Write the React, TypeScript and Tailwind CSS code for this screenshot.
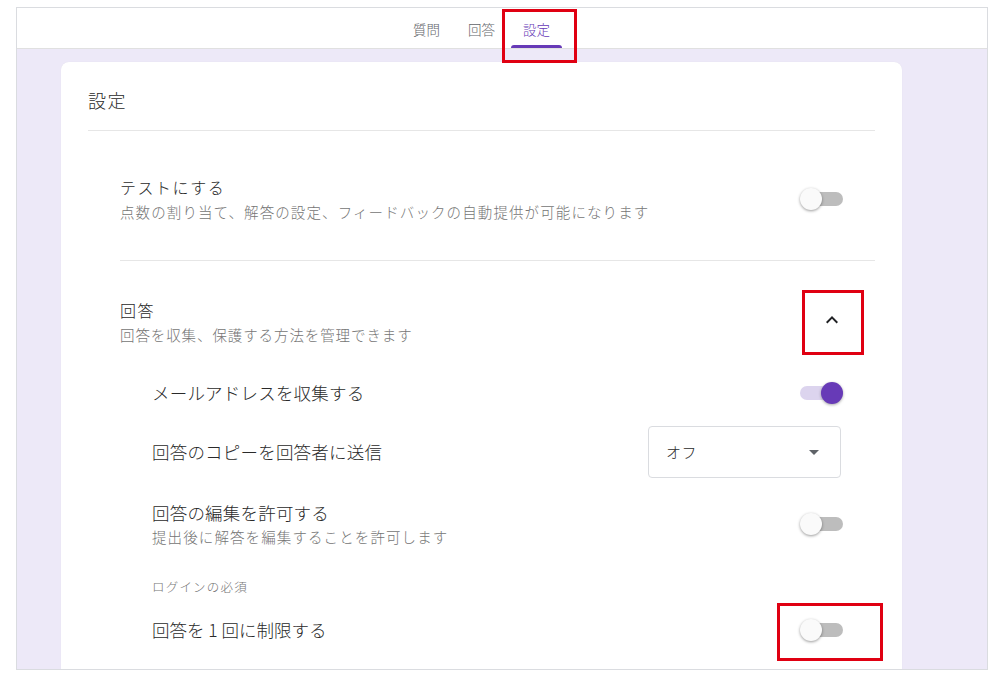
import React from "react";

function Toggle({ on = false }: { on?: boolean }) {
  if (on) {
    return (
      <div className="relative w-[43px] h-[22px] shrink-0">
        <div className="absolute left-0 right-[4px] top-[4px] h-[14px] rounded-full bg-[#dcd4ee]" />
        <div className="absolute right-0 top-0 w-[22px] h-[22px] rounded-full bg-[#673ab7] shadow-[0_1px_3px_rgba(0,0,0,0.35)]" />
      </div>
    );
  }
  return (
    <div className="relative w-[43px] h-[22px] shrink-0">
      <div className="absolute left-[4px] right-0 top-[4px] h-[14px] rounded-full bg-[#bdbdbd]" />
      <div className="absolute left-0 top-0 w-[22px] h-[22px] rounded-full bg-[#fafafa] shadow-[0_1px_3px_rgba(0,0,0,0.4)]" />
    </div>
  );
}

function RedBox({ cls }: { cls: string }) {
  return <div className={"absolute border-[3px] border-[#e00012] pointer-events-none " + cls} />;
}

export default function App() {
  return (
    <div className="relative w-[1000px] h-[681px] bg-white overflow-hidden font-light font-['Noto_Sans_CJK_JP','Noto_Sans',sans-serif]">
      <div className="absolute left-[16px] top-[7px] w-[972px] h-[663px] border border-[#dadce0] overflow-hidden flex flex-col">
        {/* header */}
        <div className="h-[41px] shrink-0 bg-white border-b border-[#e0e0e0] flex justify-center pr-[41px]">
          <div className="flex h-full items-stretch gap-[4px]">
            <div className="relative px-[12px] flex items-center pt-[2px] text-[13.5px] leading-[20px] text-[#5f6368]">質問</div>
            <div className="relative px-[12px] flex items-center pt-[2px] text-[13.5px] leading-[20px] text-[#5f6368]">回答</div>
            <div className="relative px-[12px] flex items-center pt-[2px] text-[13.5px] leading-[20px] text-[#673ab7]">
              設定
              <div className="absolute left-0 right-0 bottom-0 h-[3px] rounded-t-[3px] bg-[#673ab7]" />
            </div>
          </div>
        </div>
        {/* main */}
        <div className="flex-1 bg-[#ede9f8] pt-[13px] pl-[44px] pr-[85px] overflow-hidden">
          <div className="bg-white rounded-[8px] h-[700px] px-[27px] shadow-[0_0_1px_rgba(0,0,0,0.08)]">
            <div className="pt-[26px] text-[18px] tracking-[1.5px] leading-[24px] text-[#2a2a2a]">設定</div>
            <div className="mt-[18px] h-px bg-[#e6e6e6]" />
            <div className="pl-[32px]">
              {/* Quiz section */}
              <div className="pt-[44px] pb-[38px] pr-[32px] flex items-center justify-between">
                <div>
                  <div className="text-[16px] tracking-[1.5px] leading-[24px] text-[#2a2a2a]">テストにする</div>
                  <div className="mt-[3px] text-[14.5px] tracking-[1.1px] leading-[20px] text-[#757575]">点数の割り当て、解答の設定、フィードバックの自動提供が可能になります</div>
                </div>
                <Toggle />
              </div>
              <div className="h-px bg-[#e6e6e6]" />
              {/* Responses section */}
              <div className="pt-[37px] pr-[32px]">
                <div className="flex items-center justify-between">
                  <div>
                    <div className="text-[16px] tracking-[1.5px] leading-[24px] text-[#2a2a2a]">回答</div>
                    <div className="mt-[3px] text-[14.5px] tracking-[0.9px] leading-[20px] text-[#757575]">回答を収集、保護する方法を管理できます</div>
                  </div>
                  <svg width="24" height="24" viewBox="0 0 24 24" className="mr-[-1px] mt-[-3px]">
                    <path d="M7.41 15.41L12 10.83l4.59 4.58L18 14l-6-6-6 6z" fill="#202124" />
                  </svg>
                </div>
                <div className="pl-[32px] mt-[20px]">
                  <div className="h-[56px] flex items-center justify-between">
                    <div className="text-[17.5px] tracking-[0.2px] leading-[24px] text-[#2a2a2a]">メールアドレスを収集する</div>
                    <Toggle on />
                  </div>
                  <div className="h-[62px] flex items-center justify-between">
                    <div className="text-[17.5px] tracking-[0.2px] leading-[24px] text-[#2a2a2a]">回答のコピーを回答者に送信</div>
                    <div className="w-[193px] h-[52px] mr-[2px] border border-[#dadce0] rounded-[4px] flex items-center justify-between pl-[17px] pr-[14px]">
                      <span className="text-[15px] tracking-[0.5px] text-[#2a2a2a]">オフ</span>
                      <svg width="24" height="24" viewBox="0 0 24 24">
                        <path d="M7 10l5 5 5-5z" fill="#5f6368" />
                      </svg>
                    </div>
                  </div>
                  <div className="h-[82px] flex items-center justify-between">
                    <div>
                      <div className="text-[17.5px] tracking-[0.2px] leading-[24px] text-[#2a2a2a]">回答の編集を許可する</div>
                      <div className="mt-[2px] text-[14.5px] tracking-[1.1px] leading-[20px] text-[#757575]">提出後に解答を編集することを許可します</div>
                    </div>
                    <Toggle />
                  </div>
                  <div className="mt-[10px] text-[12.5px] tracking-[1.2px] leading-[24px] text-[#757575]">ログインの必須</div>
                  <div className="h-[52px] mt-[5px] flex items-center justify-between">
                    <div className="text-[17.5px] tracking-[0px] leading-[24px] text-[#2a2a2a]">回答を 1 回に制限する</div>
                    <Toggle />
                  </div>
                </div>
              </div>
            </div>
          </div>
        </div>
      </div>
      <RedBox cls="left-[502px] top-[9px] w-[75px] h-[54px]" />
      <RedBox cls="left-[802px] top-[290px] w-[62px] h-[65px]" />
      <RedBox cls="left-[777px] top-[603px] w-[106px] h-[58px]" />
    </div>
  );
}
